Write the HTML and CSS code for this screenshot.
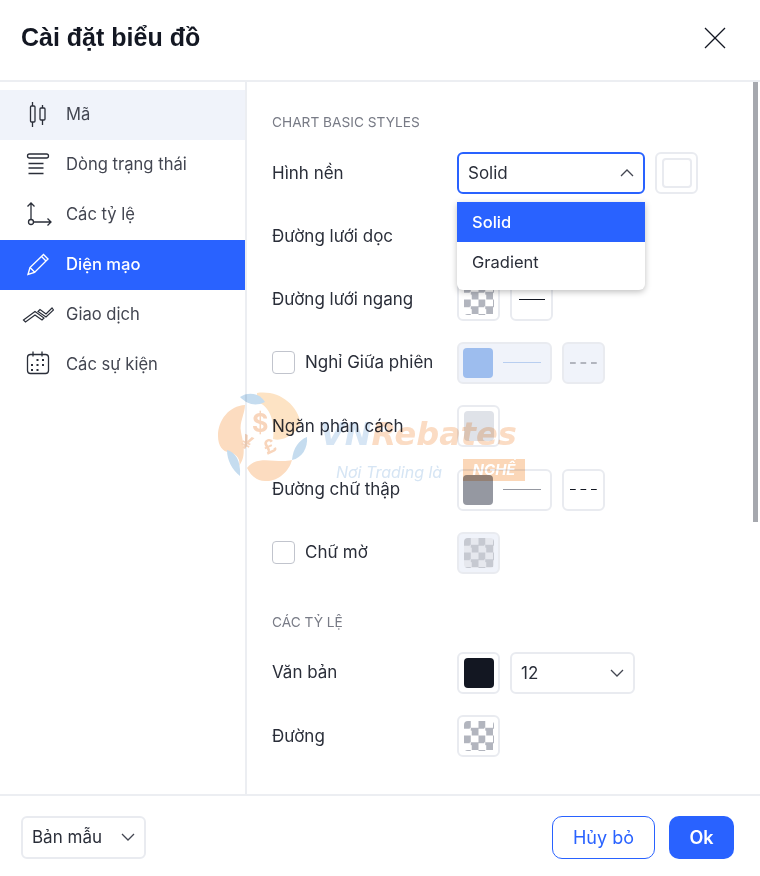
FILE: index.html
```html
<!DOCTYPE html>
<html lang="vi">
<head>
    <meta charset="UTF-8">
    <title>Cài đặt biểu đồ</title>
    <link rel="stylesheet" href="styles.css">
</head>
<body>
    <div class="dialog">
        <div class="dialog-header">
            <h1>Cài đặt biểu đồ</h1>
            <svg class="close-icon" width="24" height="24" viewBox="0 0 24 24" fill="none" stroke="#131722" stroke-width="1.3">
                <line x1="2" y1="2" x2="22" y2="22"></line>
                <line x1="22" y1="2" x2="2" y2="22"></line>
            </svg>
        </div>

        <div class="dialog-body">
            <div class="sidebar">
                <div class="nav-item nav-soft">
                    <svg width="28" height="28" viewBox="0 0 28 28" fill="none" stroke="#2a2e39" stroke-width="1.3">
                        <path d="M8.500 2v4M8.500 22v5M18.500 5v3M18.500 20v5"></path>
                        <rect x="6.500" y="6" width="4.500" height="16" rx="1"></rect>
                        <rect x="16" y="8" width="5" height="12" rx="1"></rect>
                    </svg>
                    <span>Mã</span>
                </div>
                <div class="nav-item">
                    <svg width="28" height="28" viewBox="0 0 28 28" fill="none" stroke="#2a2e39" stroke-width="1.3">
                        <rect x="3.500" y="4" width="21" height="4" rx="2"></rect>
                        <path d="M4.500 13.500h15M4.500 18h15M4.500 23.500h15"></path>
                    </svg>
                    <span>Dòng trạng thái</span>
                </div>
                <div class="nav-item">
                    <svg width="28" height="28" viewBox="0 0 28 28" fill="none" stroke="#2a2e39" stroke-width="1.3">
                        <path d="M7 19.500V3M3.500 6.500L7 3l3.500 3.500M9.500 22H27M23.500 18.500L27 22l-3.500 3.500"></path>
                        <circle cx="7" cy="22" r="2.500"></circle>
                    </svg>
                    <span>Các tỷ lệ</span>
                </div>
                <div class="nav-item nav-active">
                    <svg width="28" height="28" viewBox="0 0 28 28" fill="none" stroke="#fff" stroke-width="1.400">
                        <path d="M4 24.500l2-7L19.500 4.500 24 9 10.500 22.500z"></path>
                        <path d="M6 17.500l5 5M17.500 6.500l4.500 4.500"></path>
                    </svg>
                    <span>Diện mạo</span>
                </div>
                <div class="nav-item">
                    <svg class="icon-wide" width="32" height="28" viewBox="0 0 32 28" fill="none" stroke="#2a2e39" stroke-width="1.200">
                        <path d="M1.500 20L13 11.500 22 18l-2 2-7-5L3.500 22z"></path>
                        <path d="M16 11.500L18 9.500l6 4.500 6-6 1.500 2-7.500 7z"></path>
                    </svg>
                    <span>Giao dịch</span>
                </div>
                <div class="nav-item">
                    <svg width="28" height="28" viewBox="0 0 28 28" fill="none" stroke="#2a2e39" stroke-width="1.300">
                        <rect x="3.500" y="4.500" width="21" height="19" rx="3"></rect>
                        <path d="M9 1.500v5M18 1.500v5"></path>
                        <g fill="#2a2e39" stroke="none">
                            <rect x="12.500" y="9" width="2" height="2"></rect>
                            <rect x="18" y="9" width="2" height="2"></rect>
                            <rect x="7" y="14" width="2" height="2"></rect>
                            <rect x="12.500" y="14" width="2" height="2"></rect>
                            <rect x="18" y="14" width="2" height="2"></rect>
                            <rect x="7" y="19" width="2" height="2"></rect>
                            <rect x="12.500" y="19" width="2" height="2"></rect>
                        </g>
                    </svg>
                    <span>Các sự kiện</span>
                </div>
            </div>

            <div class="content">
                <div class="section-title first">CHART BASIC STYLES</div>
                <div class="rows">
                    <div class="row">
                        <div class="row-label">Hình nền</div>
                        <div class="select-wrap">
                            <div class="select select-open">
                                <span>Solid</span>
                                <svg class="chevron" width="16" height="16" viewBox="0 0 16 16" fill="none" stroke="#434651" stroke-width="1.3"><path d="M2 11l6-6 6 6"></path></svg>
                            </div>
                            <div class="menu">
                                <div class="menu-item menu-selected">Solid</div>
                                <div class="menu-item">Gradient</div>
                            </div>
                        </div>
                        <div class="swatch"><div class="chip chip-white"></div></div>
                    </div>
                    <div class="row">
                        <div class="row-label">Đường lưới dọc</div>
                    </div>
                    <div class="row">
                        <div class="row-label">Đường lưới ngang</div>
                        <div class="swatch"><div class="chip checker"></div></div>
                        <div class="swatch"><div class="line-solid"></div></div>
                    </div>
                    <div class="row">
                        <label class="row-label check-label"><span class="checkbox"></span>Nghỉ Giữa phiên</label>
                        <div class="swatch swatch-wide swatch-off">
                            <div class="chip chip-blue"></div>
                            <div class="line-thin line-blue"></div>
                        </div>
                        <div class="swatch swatch-off"><div class="line-dash dash-grey"></div></div>
                    </div>
                    <div class="row">
                        <div class="row-label">Ngăn phân cách</div>
                        <div class="swatch"><div class="chip chip-pale"></div></div>
                    </div>
                    <div class="row">
                        <div class="row-label">Đường chữ thập</div>
                        <div class="swatch swatch-wide">
                            <div class="chip chip-grey"></div>
                            <div class="line-thin"></div>
                        </div>
                        <div class="swatch"><div class="line-dash"></div></div>
                    </div>
                    <div class="row">
                        <label class="row-label check-label"><span class="checkbox"></span>Chữ mờ</label>
                        <div class="swatch swatch-off"><div class="chip checker checker-pale"></div></div>
                    </div>
                </div>

                <div class="section-title">CÁC TỶ LỆ</div>
                <div class="rows">
                    <div class="row">
                        <div class="row-label">Văn bản</div>
                        <div class="swatch"><div class="chip chip-dark"></div></div>
                        <div class="select select-small">
                            <span>12</span>
                            <svg class="chevron" width="16" height="16" viewBox="0 0 16 16" fill="none" stroke="#434651" stroke-width="1.3"><path d="M2 5l6 6 6-6"></path></svg>
                        </div>
                    </div>
                    <div class="row">
                        <div class="row-label">Đường</div>
                        <div class="swatch"><div class="chip checker"></div></div>
                    </div>
                </div>
            </div>
            <div class="scrollbar"></div>

            <!-- watermark sits over the form -->
            <div class="watermark">
                <svg class="wm-logo" width="92" height="92" viewBox="0 0 92 92">
                    <path d="M40 1C62-2 80 12 84 32 78 42 66 50 56 47 58 32 54 14 40 10z" fill="#fde3c4"></path>
                    <path d="M28 13C12 14 1 28 1 44c0 10 5 16 11 16 8 2 12 8 10 14 8-10 4-24 2-34-2-10 4-18 4-27z" fill="#fcdcc0"></path>
                    <path d="M30 76c10-14 30-4 45-8-3 12-15 22-27 21-8 0-14-5-18-13z" fill="#fcdcc0"></path>
                    <path d="M23 5c7-5 19-5 25 5-10 5-18 2-25-5z" fill="#c5dcef"></path>
                    <path d="M10 58c8 2 14 10 13 26-8-6-13-16-13-26z" fill="#c5dcef"></path>
                    <path d="M75 68c1-12 7-20 15-23 1 11-5 21-15 23z" fill="#c5dcef"></path>
                </svg>
                <span class="wm-sym wm-dollar">$</span>
                <span class="wm-sym wm-yen">¥</span>
                <span class="wm-sym wm-pound">£</span>
                <div class="wm-brand"><span class="wm-vn">VN</span><span class="wm-rebates">Rebates</span></div>
                <div class="wm-slogan">Nơi Trading là</div>
                <div class="wm-badge">NGHỀ</div>
            </div>
        </div>

        <div class="dialog-footer">
            <div class="select select-template">
                <span>Bản mẫu</span>
                <svg class="chevron" width="16" height="16" viewBox="0 0 16 16" fill="none" stroke="#434651" stroke-width="1.3"><path d="M2 5l6 6 6-6"></path></svg>
            </div>
            <div class="footer-buttons">
                <button class="btn btn-cancel">Hủy bỏ</button>
                <button class="btn btn-ok">Ok</button>
            </div>
        </div>
    </div>
</body>
</html>
```

FILE: styles.css
```css
* {
    margin: 0;
    padding: 0;
    box-sizing: border-box;
}

body {
    font-family: Inter, 'Liberation Sans', sans-serif;
    background: white;
    color: #131722;
    font-size: 17px;
}

.dialog {
    width: 760px;
    height: 876px;
    display: flex;
    flex-direction: column;
    overflow: hidden;
}

.dialog-header {
    height: 82px;
    flex: none;
    display: flex;
    align-items: center;
    justify-content: space-between;
    padding: 0 33px 5px 21px;
    border-bottom: 2px solid #eceef2;
}

.dialog-header h1 {
    font-family: 'Liberation Sans', Arial, sans-serif;
    font-size: 25px;
    font-weight: bold;
}

.dialog-body {
    position: relative;
    flex: 1;
    display: flex;
    min-height: 0;
}

.sidebar {
    width: 247px;
    padding-top: 8px;
    border-right: 2px solid #eceef2;
}

.nav-item {
    height: 50px;
    display: flex;
    align-items: center;
    padding-left: 24px;
    padding-bottom: 2px;
    gap: 14px;
    font-size: 16.600px;
    color: #434651;
}

.nav-item svg {
    flex: none;
}

.nav-item .icon-wide {
    margin-left: -2px;
    margin-right: -2px;
}

.nav-soft {
    background: #f0f3fa;
}

.nav-active {
    background: #2962ff;
    color: white;
    font-weight: 500;
}

.content {
    flex: 1;
    padding: 32px 0 0 25px;
}

.section-title {
    font-size: 13.700px;
    line-height: 16px;
    color: #787b86;
    margin: 40px 0 22px;
}

.section-title.first {
    margin-top: 0;
}

.rows {
    display: flex;
    flex-direction: column;
    gap: 21.330px;
}

.row {
    height: 42px;
    display: flex;
    align-items: center;
    gap: 10px;
}

.row-label {
    width: 175px;
    padding-bottom: 1px;
    color: #2a2e39;
}

.check-label {
    display: flex;
    align-items: center;
    gap: 10px;
    white-space: nowrap;
}

.checkbox {
    width: 23px;
    height: 23px;
    flex: none;
    border: 1px solid #c1c4cd;
    border-radius: 4px;
}

.select-wrap {
    position: relative;
}

.select {
    height: 42px;
    display: flex;
    align-items: center;
    justify-content: space-between;
    padding: 0 8px 0 9px;
    background: white;
    border: 2px solid #e9ebf0;
    border-radius: 6px;
    color: #2a2e39;
}

.select-open {
    width: 188px;
    border-color: #2962ff;
}

.select-small {
    width: 125px;
}

.select-template {
    width: 125px;
    height: 43px;
}

.menu {
    position: absolute;
    top: 50px;
    left: 0;
    width: 188px;
    padding-bottom: 8px;
    background: white;
    border-radius: 0 0 6px 6px;
    box-shadow: 0 2px 6px rgba(0, 0, 0, 0.25);
    z-index: 2;
}

.menu-item {
    height: 40px;
    display: flex;
    align-items: center;
    padding-left: 15px;
    font-size: 16.500px;
    color: #2a2e39;
}

.menu-selected {
    background: #2962ff;
    color: white;
    font-weight: 500;
}

.swatch {
    width: 43px;
    height: 42px;
    display: flex;
    align-items: center;
    justify-content: center;
    flex: none;
    border: 2px solid #e9ebf0;
    border-radius: 6px;
    background: white;
}

.swatch-wide {
    width: 95px;
    justify-content: flex-start;
    padding-left: 4px;
    gap: 10px;
}

.swatch-off {
    background: #f0f3fa;
}

.chip {
    width: 30px;
    height: 30px;
    flex: none;
    border-radius: 4px;
}

.chip-white {
    border: 2px solid #e9ebf0;
}

.chip-blue {
    background: #9dbdee;
}

.chip-pale {
    background: #dfe2e8;
}

.chip-grey {
    background: #9598a1;
}

.chip-dark {
    background: #131722;
}

.checker {
    background-color: white;
    background-image: conic-gradient(transparent 25%, #b2b5be 25% 50%, transparent 50% 75%, #b2b5be 75%);
    background-size: 14.500px 14.500px;
}

.checker-pale {
    background-color: #e6e8ee;
    background-image: conic-gradient(transparent 25%, #c6c9d1 25% 50%, transparent 50% 75%, #c6c9d1 75%);
}

.line-solid {
    width: 26px;
    height: 1.500px;
    background: #131722;
}

.line-thin {
    width: 38px;
    height: 1px;
    background: #9598a1;
}

.line-blue {
    background: #b8cef0;
}

.line-dash {
    width: 27px;
    height: 1.500px;
    background-image: linear-gradient(90deg, #131722 6px, transparent 6px);
    background-size: 10.500px 2px;
}

.dash-grey {
    background-image: linear-gradient(90deg, #b2b5be 6px, transparent 6px);
}

.scrollbar {
    position: absolute;
    right: 2px;
    top: 0;
    width: 5px;
    height: 440px;
    background: #a6a8ae;
}

.watermark {
    position: absolute;
    left: 217px;
    top: 310px;
    width: 330px;
    height: 96px;
    pointer-events: none;
    mix-blend-mode: multiply;
}

.wm-logo {
    position: absolute;
    left: 0;
    top: 0;
}

.wm-sym {
    position: absolute;
    font-weight: bold;
    color: #f8d5bc;
    font-size: 19px;
    line-height: 20px;
}

.wm-dollar {
    left: 35px;
    top: 17px;
    font-size: 25px;
    line-height: 28px;
}

.wm-yen {
    left: 24px;
    top: 41px;
    transform: rotate(25deg);
}

.wm-pound {
    left: 47px;
    top: 45px;
    transform: rotate(-25deg);
}

.wm-brand {
    position: absolute;
    left: 103px;
    top: 20px;
    font-family: 'DejaVu Sans', sans-serif;
    font-size: 32px;
    line-height: 44px;
    font-weight: bold;
    font-style: italic;
    white-space: nowrap;
}

.wm-vn {
    color: #d6e5f4;
}

.wm-rebates {
    color: #fbdcc4;
}

.wm-slogan {
    position: absolute;
    left: 119px;
    top: 70px;
    font-size: 16px;
    font-style: italic;
    color: #d6e5f4;
    white-space: nowrap;
}

.wm-badge {
    position: absolute;
    left: 246px;
    top: 67px;
    width: 62px;
    height: 22px;
    font-size: 15px;
    line-height: 22px;
    font-weight: bold;
    font-style: italic;
    text-align: center;
    color: #fff;
    background: #fbd7b8;
}

.dialog-footer {
    height: 82px;
    flex: none;
    display: flex;
    align-items: center;
    justify-content: space-between;
    padding: 2px 26px 0 21px;
    border-top: 2px solid #eceef2;
}

.footer-buttons {
    display: flex;
    gap: 14px;
}

.btn {
    height: 43px;
    font-family: inherit;
    font-size: 18px;
    border-radius: 10px;
    cursor: pointer;
}

.btn-cancel {
    width: 103px;
    background: white;
    color: #2962ff;
    border: 1px solid #2962ff;
}

.btn-ok {
    width: 65px;
    background: #2962ff;
    color: white;
    border: none;
    font-weight: 600;
}
```
